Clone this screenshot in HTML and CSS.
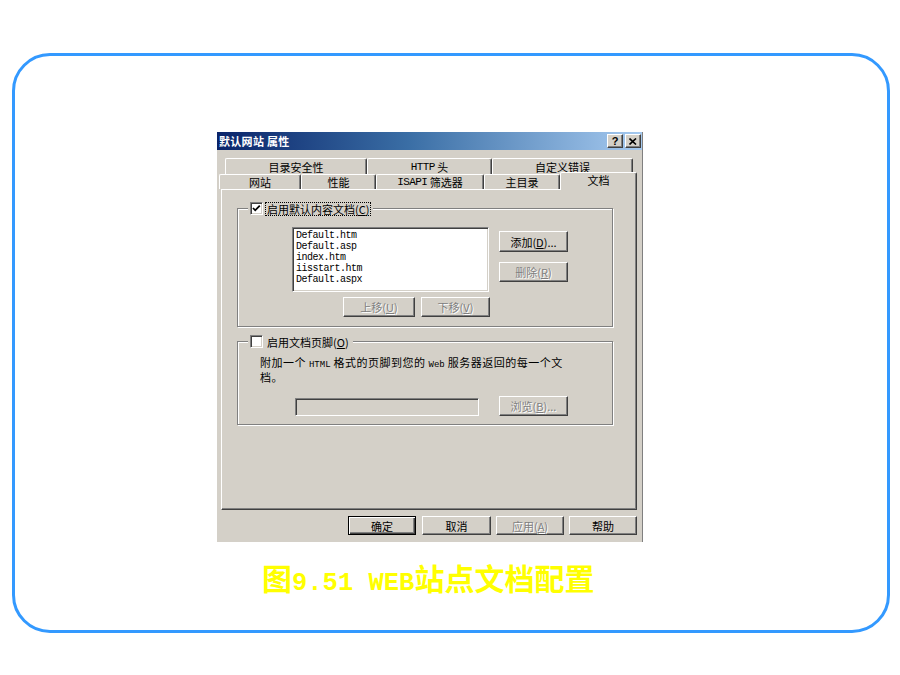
FILE: index.html
```html
<!DOCTYPE html>
<html lang="zh-CN">
<head>
<meta charset="utf-8">
<title>默认网站 属性</title>
<link rel="stylesheet" href="styles.css">
</head>
<body>
<div class="frame">
  <div class="dialog">
    <div class="titlebar">
      <span class="title">默认网站 属性</span>
      <div class="tb-btns">
        <span class="tb-btn q">?</span>
        <span class="tb-btn"><svg width="8" height="7" viewBox="0 0 8 7"><path d="M0.5 0.5 L7 6.5 M7 0.5 L0.5 6.5" stroke="#000" stroke-width="1.6" fill="none"/></svg></span>
      </div>
    </div>
    <div class="dlg-body">
      <div class="tabrow back">
        <div class="tab w142">目录安全性</div>
        <div class="tab w125"><span class="mono">HTTP</span>&nbsp;头</div>
        <div class="tab w141">自定义错误</div>
      </div>
      <div class="tabrow front">
        <div class="tab w82">网站</div>
        <div class="tab w75">性能</div>
        <div class="tab w108"><span class="mono">ISAPI</span>&nbsp;筛选器</div>
        <div class="tab w76">主目录</div>
        <div class="tab w77 selected">文档</div>
      </div>
      <div class="panel">
        <div class="group g1">
          <div class="legend">
            <span class="check"><svg width="9" height="9" viewBox="0 0 9 9"><path d="M1 4 L3.2 6.3 L7.8 1.6" stroke="#000" stroke-width="1.8" fill="none"/></svg></span>
            <span class="lbl focus">启用默认内容文档(<u>C</u>)</span>
          </div>
          <div class="listrow">
            <div class="listbox">
              <div>Default.htm</div>
              <div>Default.asp</div>
              <div>index.htm</div>
              <div>iisstart.htm</div>
              <div>Default.aspx</div>
            </div>
            <div class="sidebtns">
              <span class="btn w69 h21">添加(<u>D</u>)...</span>
              <span class="btn w69 h20 disabled">删除(<u>R</u>)</span>
            </div>
          </div>
          <div class="moverow">
            <span class="btn w72 h20 disabled">上移(<u>U</u>)</span>
            <span class="btn w69 h20 disabled">下移(<u>V</u>)</span>
          </div>
        </div>
        <div class="group g2">
          <div class="legend">
            <span class="check"></span>
            <span class="lbl">启用文档页脚(<u>O</u>)</span>
          </div>
          <p class="desc">附加一个 <span class="mono sm">HTML</span> 格式的页脚到您的 <span class="mono sm">Web</span> 服务器返回的每一个文<br>档。</p>
          <div class="footrow">
            <span class="textbox"></span>
            <span class="btn w69 h20 disabled">浏览(<u>B</u>)...</span>
          </div>
        </div>
      </div>
      <div class="actions">
        <span class="btn w68 h19 default">确定</span>
        <span class="btn w69 h19">取消</span>
        <span class="btn w68 h19 disabled">应用(<u>A</u>)</span>
        <span class="btn w68 h19">帮助</span>
      </div>
    </div>
  </div>
  <div class="caption">图<span class="cap-mono">9.51 WEB</span>站点文档配置</div>
</div>
</body>
</html>
```

FILE: styles.css
```css
* { box-sizing: border-box; }
html, body { margin: 0; padding: 0; background: #fff; }
body { width: 900px; height: 675px; overflow: hidden; }

.frame {
  margin: 53px 0 0 12px;
  width: 878px;
  height: 580px;
  border: 3px solid #3399ff;
  border-radius: 38px;
  padding: 76px 0 0 202px;
  display: flex;
  flex-direction: column;
}

.dialog {
  width: 426px;
  height: 410px;
  background: #d4d0c8;
  border-right: 1px solid #808080;
  display: flex;
  flex-direction: column;
  font-family: "Noto Sans CJK SC", sans-serif;
  font-size: 11px;
  color: #000;
}

.titlebar {
  height: 18px;
  background: linear-gradient(to right, #0a246a 0%, #3a6ea5 45%, #a6caf0 100%);
  display: flex;
  align-items: center;
  justify-content: space-between;
  padding: 0 1px 0 2px;
}
.title { color: #fff; font-weight: 700; font-size: 11px; line-height: 14px; letter-spacing: 0.3px; }
.tb-btns { display: flex; gap: 2px; }
.tb-btn {
  width: 16px; height: 14px;
  background: #d4d0c8;
  border: 1px solid; border-color: #fff #404040 #404040 #fff;
  box-shadow: inset -1px -1px #808080;
  display: flex; align-items: center; justify-content: center;
  font-family: "Liberation Sans", sans-serif; font-weight: 700; font-size: 11px; line-height: 12px;
}

.dlg-body { padding: 8px 0 0 2px; display: flex; flex-direction: column; }

.tabrow { display: flex; align-items: flex-end; }
.tabrow.back { margin-left: 6px; height: 16px; }
.tabrow.front { height: 15px; }
.tab {
  height: 16px;
  background: #d4d0c8;
  border-top: 1px solid #fff;
  border-left: 1px solid #fff;
  border-right: 1px solid #404040;
  box-shadow: inset -1px 0 #808080;
  border-radius: 2px 2px 0 0;
  display: flex; align-items: center; justify-content: center;
  line-height: 12px;
  white-space: nowrap;
}
.tabrow.front .tab { height: 15px; }
.tabrow.front .tab.selected {
  height: 18px;
  margin-bottom: -1px;
  position: relative;
  z-index: 2;
  align-items: flex-start;
  padding-top: 1px;
}
.w142 { width: 142px; } .w125 { width: 125px; } .w141 { width: 141px; }
.w82 { width: 82px; } .w75 { width: 75px; } .w108 { width: 108px; }
.w76 { width: 76px; } .w77 { width: 77px; }
.w69 { width: 69px; } .w72 { width: 72px; } .w68 { width: 68px; }
.h21 { height: 21px; } .h20 { height: 20px; } .h19 { height: 19px; }

.mono { font-family: "Liberation Mono", monospace; font-size: 11px; letter-spacing: -0.6px; }
.mono.sm { font-size: 9px; letter-spacing: 0; }

.panel {
  margin-left: 2px;
  width: 416px;
  height: 321px;
  border: 1px solid; border-color: #fff #404040 #404040 #fff;
  box-shadow: inset -1px -1px #808080;
  display: flex; flex-direction: column;
  padding: 18px 0 0 15px;
}

.group {
  width: 376px;
  border: 1px solid #808080;
  box-shadow: inset 1px 1px #fff, 1px 1px #fff;
  display: flex; flex-direction: column;
}
.g1 { height: 119px; }
.g2 { height: 84px; margin-top: 14px; }

.legend {
  display: flex; align-items: center; gap: 3px;
  margin: -7px 0 0 10px;
  padding: 0 3px 0 2px;
  height: 13px;
  background: #d4d0c8;
  align-self: flex-start;
}
.check {
  width: 13px; height: 13px;
  background: #fff;
  border: 1px solid; border-color: #808080 #fff #fff #808080;
  box-shadow: inset 1px 1px #404040, inset -1px -1px #d4d0c8;
  display: flex; align-items: center; justify-content: center;
}
.lbl { line-height: 12px; padding: 0 1px; }
.lbl.focus { outline: 1px dotted #000; outline-offset: 0; }

.listrow { display: flex; margin: 12px 0 0 54px; }
.listbox {
  width: 197px; height: 65px;
  background: #fff;
  border: 1px solid; border-color: #808080 #fff #fff #808080;
  box-shadow: inset 1px 1px #404040, inset -1px -1px #d4d0c8;
  padding: 2px 0 0 3px;
  font-family: "Liberation Mono", monospace;
  font-size: 10px;
  letter-spacing: -0.5px;
  line-height: 11px;
}
.sidebtns { display: flex; flex-direction: column; gap: 10px; margin: 4px 0 0 10px; }

.btn {
  background: #d4d0c8;
  border: 1px solid; border-color: #fff #404040 #404040 #fff;
  box-shadow: inset -1px -1px #808080;
  display: flex; align-items: center; justify-content: center;
  line-height: 12px;
  white-space: nowrap;
}
.btn.disabled { color: #808080; text-shadow: 1px 1px 0 #fff; }
.btn.default {
  border-color: #000;
  box-shadow: inset 1px 1px #fff, inset -1px -1px #404040, inset -2px -2px #808080;
}

.moverow { display: flex; gap: 6px; margin: 5px 0 0 105px; }

.desc { margin: 8px 0 0 22px; line-height: 12px; white-space: nowrap; letter-spacing: 0.5px; }
.footrow { display: flex; align-items: flex-end; margin: 13px 0 0 57px; gap: 20px; }
.textbox {
  width: 184px; height: 18px;
  background: #d4d0c8;
  border: 1px solid; border-color: #808080 #fff #fff #808080;
  box-shadow: inset 1px 1px #404040, inset -1px -1px #d4d0c8;
}

.actions {
  display: flex; justify-content: flex-end; gap: 5px;
  margin: 6px 5px 0 0;
}
.actions .btn:first-child { margin-right: 1px; }

.caption {
  margin: 20px 0 0 45px;
  color: #ffff00;
  font-family: "Noto Sans CJK SC", sans-serif;
  font-weight: 700;
  font-size: 30px;
  line-height: 30px;
  white-space: nowrap;
}
.cap-mono { font-family: "Liberation Mono", monospace; font-size: 25.5px; font-weight: 700; }
```
